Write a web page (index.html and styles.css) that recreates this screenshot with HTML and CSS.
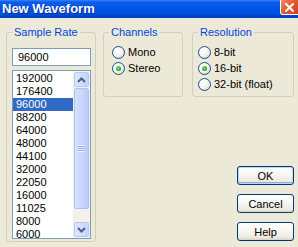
FILE: index.html
```html
<!DOCTYPE html>
<html lang="en">
<head>
  <meta charset="UTF-8">
  <title>New Waveform</title>
<link rel="stylesheet" href="styles.css">
</head>
<body>
  <div class="window">
    <div class="titlebar">
      <span class="title">New Waveform</span>
      <span class="close-btn">
        <svg width="9" height="9" viewBox="0 0 9 9"><path d="M1 1 L8 8 M8 1 L1 8" stroke="#fff" stroke-width="2" stroke-linecap="square"/></svg>
      </span>
    </div>

    <div class="dialog-body">
      <!-- Sample rate list -->
      <fieldset class="group rate-group">
        <legend>Sample Rate</legend>
        <input class="rate-input" type="text" value="96000">
        <div class="listbox">
          <div class="list-items">
            <div class="list-item">192000</div>
            <div class="list-item">176400</div>
            <div class="list-item selected">96000</div>
            <div class="list-item">88200</div>
            <div class="list-item">64000</div>
            <div class="list-item">48000</div>
            <div class="list-item">44100</div>
            <div class="list-item">32000</div>
            <div class="list-item">22050</div>
            <div class="list-item">16000</div>
            <div class="list-item">11025</div>
            <div class="list-item">8000</div>
            <div class="list-item">6000</div>
          </div>
          <div class="scrollbar">
            <div class="sb-btn">
              <svg width="9" height="6" viewBox="0 0 9 6"><path d="M1 5 L4.5 1.5 L8 5" fill="none" stroke="#4d6185" stroke-width="2"/></svg>
            </div>
            <div class="sb-thumb"><span class="grip"></span></div>
            <div class="sb-track"></div>
            <div class="sb-btn">
              <svg width="9" height="6" viewBox="0 0 9 6"><path d="M1 1 L4.5 4.5 L8 1" fill="none" stroke="#4d6185" stroke-width="2"/></svg>
            </div>
          </div>
        </div>
      </fieldset>

      <div class="side">
        <div class="options">
          <fieldset class="group channels-group">
            <legend>Channels</legend>
            <label class="radio-row"><span class="radio"></span>Mono</label>
            <label class="radio-row"><span class="radio checked"></span>Stereo</label>
          </fieldset>
          <fieldset class="group resolution-group">
            <legend>Resolution</legend>
            <label class="radio-row"><span class="radio"></span>8-bit</label>
            <label class="radio-row"><span class="radio checked"></span>16-bit</label>
            <label class="radio-row"><span class="radio"></span>32-bit (float)</label>
          </fieldset>
        </div>

        <div class="buttons">
          <button class="xp-btn default">OK</button>
          <button class="xp-btn">Cancel</button>
          <button class="xp-btn">Help</button>
        </div>
      </div>
    </div>
  </div>
</body>
</html>
```

FILE: styles.css
```css
body {
  margin: 0;
  background: #ece9d8;
  font-family: 'Liberation Sans', Arial, sans-serif;
  font-size: 11px;
  color: #000;
}

.window {
  width: 298px;
  height: 247px;
  overflow: hidden;
}

.titlebar {
  height: 18px;
  display: flex;
  justify-content: space-between;
  align-items: flex-start;
  overflow: hidden;
  background: linear-gradient(#3c84f4 0, #0a5ced 2px, #0055e5 8px, #0050df 14px, #0043c8 16px, #003cc0 18px);
}

.title {
  margin: 2px 0 0 2px;
  font-weight: bold;
  font-size: 13px;
  line-height: 14px;
  color: #fff;
  text-shadow: 1px 1px 0 #0b2a8c;
}

.close-btn {
  width: 21px;
  height: 15px;
  margin-right: -3px;
  flex-shrink: 0;
  box-sizing: border-box;
  border: 1px solid #fff;
  border-top: none;
  border-radius: 0 0 0 3px;
  background: linear-gradient(135deg, #f08d6e 0, #e3592f 45%, #c8401a 100%);
  display: flex;
  align-items: center;
  justify-content: center;
  padding-right: 3px;
}

.dialog-body {
  display: flex;
  gap: 7px;
  padding: 8px 0 0 6px;
}

.group {
  margin: 0;
  border: 1px solid #d0d0bf;
  border-radius: 3px;
  padding: 0 4px 0 5px;
}

.group legend {
  padding: 0 2px;
  color: #0046d5;
  line-height: 13px;
}

.rate-group {
  width: 79px;
  padding-bottom: 2px;
}

.rate-input {
  display: block;
  box-sizing: border-box;
  width: 79px;
  height: 18px;
  margin: 9px 0 0;
  padding: 0 5px;
  border: 1px solid #7f9db9;
  font-family: inherit;
  font-size: 11px;
  outline: none;
}

.listbox {
  display: flex;
  box-sizing: border-box;
  width: 79px;
  height: 169px;
  margin-top: 4px;
  border: 1px solid #7f9db9;
  background: #fff;
  overflow: hidden;
}

.list-items {
  flex: 1;
  padding-top: 1px;
}

.list-item {
  height: 13px;
  line-height: 13px;
  padding-left: 3px;
}

.list-item.selected {
  background: #316ac5;
  color: #fff;
}

.scrollbar {
  width: 17px;
  display: flex;
  flex-direction: column;
  background: #f3f1ec;
}

.sb-btn {
  height: 15px;
  margin: 1px;
  box-sizing: border-box;
  border: 1px solid #b6c9f4;
  border-radius: 2px;
  background: linear-gradient(90deg, #dde8fe, #c3d4fd);
  display: flex;
  align-items: center;
  justify-content: center;
}

.sb-thumb {
  height: 121px;
  margin: 0 1px;
  box-sizing: border-box;
  border: 1px solid #aec3f4;
  border-radius: 2px;
  background: linear-gradient(90deg, #d6e2fe, #c4d5fc 60%, #b8cbf9);
  display: flex;
  align-items: center;
  justify-content: center;
}

.grip {
  width: 7px;
  height: 7px;
  background: repeating-linear-gradient(#eef3fe 0, #eef3fe 1px, #8eaaf0 1px, #8eaaf0 2px);
}

.sb-track {
  flex: 1;
}

.side {
  width: 191px;
  display: flex;
  flex-direction: column;
}

.options {
  display: flex;
  gap: 9px;
}

.channels-group {
  width: 69px;
  padding-left: 5px;
}

.resolution-group {
  width: 91px;
  padding-left: 5px;
  padding-bottom: 4px;
}

.radio-row {
  display: flex;
  align-items: center;
  height: 16px;
}

.radio-row:first-of-type {
  margin-top: 5px;
}

.channels-group .radio {
  margin-left: 3px;
}

.radio {
  position: relative;
  width: 13px;
  height: 13px;
  box-sizing: border-box;
  margin-right: 3px;
  border: 1px solid #1c5180;
  border-radius: 50%;
  background: radial-gradient(circle at 35% 35%, #fff 20%, #ececea 60%, #d2d2cc 100%);
}

.radio.checked::after {
  content: "";
  position: absolute;
  left: 3px;
  top: 3px;
  width: 5px;
  height: 5px;
  border-radius: 50%;
  background: radial-gradient(circle at 40% 40%, #7ee07e 0, #21a121 70%);
}

.buttons {
  margin-top: auto;
  align-self: flex-end;
  display: flex;
  flex-direction: column;
  gap: 9px;
  margin-bottom: 1px;
}

.xp-btn {
  width: 57px;
  height: 19px;
  padding: 0;
  border: 1px solid #003c74;
  border-radius: 3px;
  background: linear-gradient(#fff 0, #f6f5f0 50%, #ece9df 85%, #d6d0c5 100%);
  font-family: inherit;
  font-size: 11px;
  color: #000;
}

.xp-btn.default {
  box-shadow: inset 0 0 0 1px #bcd4f6, inset 0 -1px 0 1px #89ade4;
}
```
